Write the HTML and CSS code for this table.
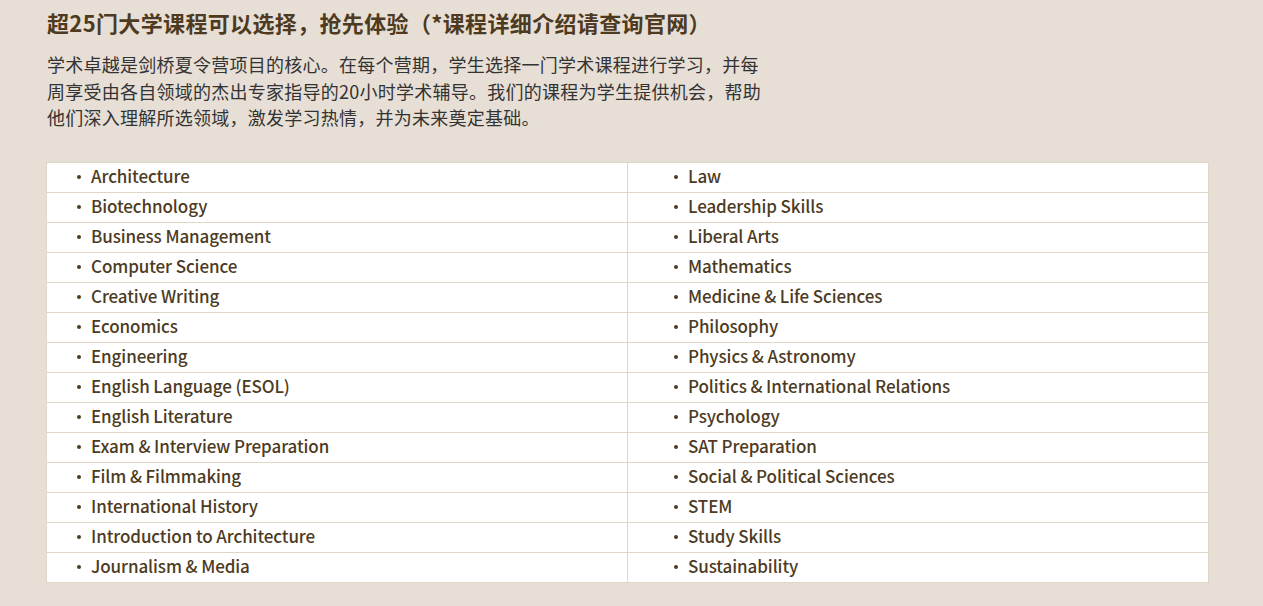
FILE: index.html
```html
<!DOCTYPE html>
<html>
	<head>
		<meta charset="utf-8">
		<title>学术课程</title>
		<link rel="stylesheet" href="styles.css">
	</head>
	<body>
		<div class="wrap">
			<h2 class="title">超25门大学课程可以选择，抢先体验（*课程详细介绍请查询官网）</h2>
			<p class="intro">学术卓越是剑桥夏令营项目的核心。在每个营期，学生选择一门学术课程进行学习，并每周享受由各自领域的杰出专家指导的20小时学术辅导。我们的课程为学生提供机会，帮助他们深入理解所选领域，激发学习热情，并为未来奠定基础。</p>

			<table class="courses">
				<tr><td><span>Architecture</span></td><td><span>Law</span></td></tr>
				<tr><td><span>Biotechnology</span></td><td><span>Leadership Skills</span></td></tr>
				<tr><td><span>Business Management</span></td><td><span>Liberal Arts</span></td></tr>
				<tr><td><span>Computer Science</span></td><td><span>Mathematics</span></td></tr>
				<tr><td><span>Creative Writing</span></td><td><span>Medicine &amp; Life Sciences</span></td></tr>
				<tr><td><span>Economics</span></td><td><span>Philosophy</span></td></tr>
				<tr><td><span>Engineering</span></td><td><span>Physics &amp; Astronomy</span></td></tr>
				<tr><td><span>English Language (ESOL)</span></td><td><span>Politics &amp; International Relations</span></td></tr>
				<tr><td><span>English Literature</span></td><td><span>Psychology</span></td></tr>
				<tr><td><span>Exam &amp; Interview Preparation</span></td><td><span>SAT Preparation</span></td></tr>
				<tr><td><span>Film &amp; Filmmaking</span></td><td><span>Social &amp; Political Sciences</span></td></tr>
				<tr><td><span>International History</span></td><td><span>STEM</span></td></tr>
				<tr><td><span>Introduction to Architecture</span></td><td><span>Study Skills</span></td></tr>
				<tr><td><span>Journalism &amp; Media</span></td><td><span>Sustainability</span></td></tr>
			</table>
		</div>
	</body>
</html>
```

FILE: styles.css
```css
*{
	margin: 0;
	padding: 0;
	box-sizing: border-box;
}
body{
	background: #e7dfd5;
	font-family: "Noto Sans CJK SC", "Noto Sans", sans-serif;
}
.wrap{
	padding: 7px 0 0 47px;
}
.title{
	font-size: 22px;
	letter-spacing: 0.35px;
	line-height: 30px;
	font-weight: bold;
	color: #4e3a20;
}
.intro{
	width: 720px;
	margin-top: 14px;
	font-size: 18px;
	letter-spacing: 0.25px;
	line-height: 26.5px;
	color: #333333;
}
.courses{
	width: 1163px;
	margin: 31px 0 0 -1px;
	border-collapse: collapse;
	background: #ffffff;
	table-layout: fixed;
}
.courses td{
	height: 30px;
	border: 1px solid #e0d6c6;
	padding: 0 0 3px 30px;
	font-size: 17px;
	font-weight: 500;
	letter-spacing: -0.1px;
	color: #4d3b23;
	vertical-align: middle;
}
.courses td + td{
	padding-left: 46px;
}
.courses td span::before{
	content: "";
	display: inline-block;
	width: 4px;
	height: 4px;
	border-radius: 50%;
	background: #4d3b23;
	margin: 0 10px 3px 0;
	vertical-align: middle;
}
```
